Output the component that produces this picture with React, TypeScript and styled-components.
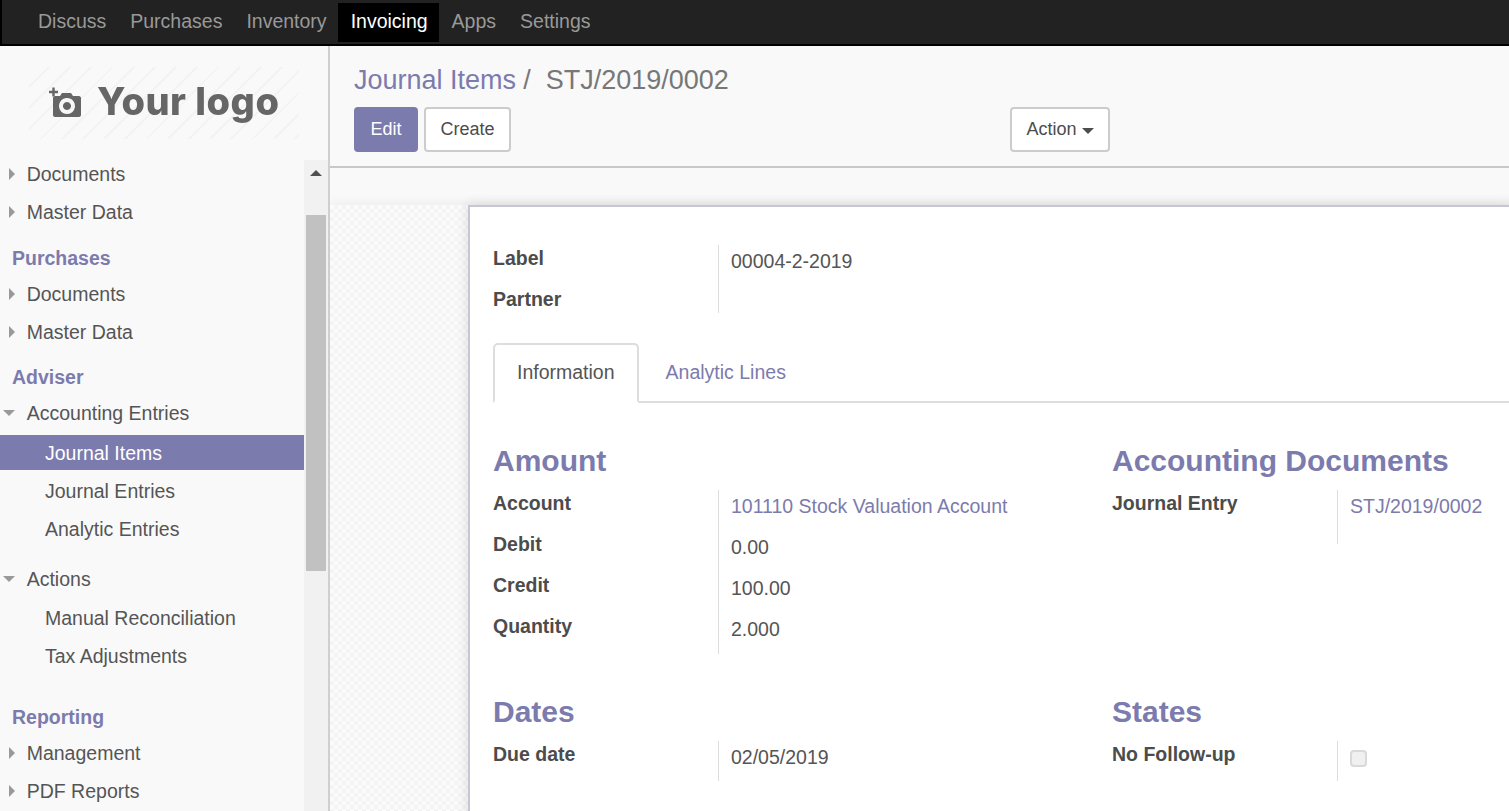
import React from "react";
import styled, { createGlobalStyle } from "styled-components";

const Global = createGlobalStyle`
  html, body { margin: 0; padding: 0; height: 100%; overflow: hidden; }
  body { font-family: "Liberation Sans", Arial, sans-serif; font-size: 19.5px; color: #4c4c4c; background: #f9f9f9; }
  #root { height: 100%; }
  * { box-sizing: border-box; }
`;

const Page = styled.div`
  width: 1509px; height: 811px; display: flex; flex-direction: column; overflow: hidden;
`;

const TopBar = styled.nav`
  height: 46px; flex: none; display: flex; align-items: stretch;
  background: #222; border-bottom: 2px solid #000; border-left: 2px solid #000;
  padding: 3px 0 2px 24px;
`;
const NavItem = styled.a<{ $active?: boolean }>`
  display: flex; align-items: center; padding: 0 12px 2px;
  font-size: 19.5px; color: ${p => (p.$active ? "#fff" : "#999")};
  background: ${p => (p.$active ? "#000" : "transparent")};
  ${p => p.$active && "margin: 0 1px 0 -1px; padding-left: 13px; padding-right: 11px;"}
`;

const Body = styled.div`flex: 1; display: flex; min-height: 0;`;

const Sidebar = styled.aside`
  width: 330px; flex: none; display: flex; flex-direction: column;
  background: #f9f9f9; border-right: 2px solid #cfcfcf;
`;
const LogoBox = styled.div`
  height: 114px; flex: none; padding: 21px 29px 0;
`;
const LogoImage = styled.div`
  width: 270px; height: 72px; display: flex; align-items: center; gap: 15px; padding: 0 0 0 20px;
  background: repeating-linear-gradient(135deg, #f9f9f9 0 13px, #f3f3f3 13px 15px);
`;
const LogoText = styled.span`
  font-family: Inter, "Liberation Sans", sans-serif; font-weight: 800; font-size: 38px; line-height: 1;
  color: #666; position: relative; top: -2px; filter: blur(0.4px); white-space: nowrap; letter-spacing: 0.5px;
`;

const MenuArea = styled.div`flex: 1; display: flex; min-height: 0;`;
const MenuScroll = styled.div`flex: 1; min-width: 0; overflow: hidden;`;
const MenuInner = styled.div`margin-top: -5px;`;
const MenuRow = styled.div<{ $sub?: boolean; $gap?: number; $active?: boolean }>`
  height: ${p => (p.$active ? 35 : 38)}px; display: flex; align-items: center;
  margin-top: ${p => p.$gap ?? 0}px;
  padding-left: ${p => (p.$sub ? 45 : 3)}px;
  padding-top: ${p => (p.$active ? 1 : 0)}px;
  background: ${p => (p.$active ? "#7c7bad" : "transparent")};
  color: ${p => (p.$active ? "#fff" : "#555")};
  white-space: nowrap;
`;
const CaretSlot = styled.span`width: 23.700px; flex: none; display: flex; align-items: center;`;
const CaretRight = styled.i`
  display: block; margin-left: 6px; width: 0; height: 0;
  border-left: 6px solid #999; border-top: 6px solid transparent; border-bottom: 6px solid transparent;
`;
const CaretDown = styled.i`
  display: block; width: 0; height: 0;
  border-top: 6px solid #999; border-left: 6px solid transparent; border-right: 6px solid transparent;
`;
const MenuSection = styled.div<{ $gap: number }>`
  height: 30px; margin-top: ${p => p.$gap}px; padding-left: 12px; display: flex; align-items: center;
  font-weight: 700; color: #7c7bad;
`;

const ScrollTrack = styled.div`
  width: 24px; flex: none; background: #f1f1f1; display: flex; flex-direction: column; padding: 0 2px;
`;
const ScrollArrow = styled.div`
  height: 55px; flex: none; display: flex; justify-content: center; padding-top: 10px;
  &::before { content: ""; width: 0; height: 0; border-bottom: 6px solid #505050; border-left: 6px solid transparent; border-right: 6px solid transparent; }
`;
const ScrollThumb = styled.div`height: 356px; flex: none; background: #c1c1c1;`;

const Main = styled.main`flex: 1; min-width: 0; display: flex; flex-direction: column; overflow: hidden;`;
const ControlPanel = styled.header`
  height: 122px; flex: none; border-bottom: 2px solid #c8c8c8; background: #f9f9f9; padding: 14px 24px 0;
`;
const Breadcrumb = styled.div`font-size: 27px; line-height: 40px; color: #777; white-space: pre; word-spacing: -0.1px;`;
const Crumb = styled.a`color: #7c7bad;`;
const ControlRow = styled.div`display: grid; grid-template-columns: 656px 1fr; margin-top: 7px;`;
const ButtonGroup = styled.div`display: flex; gap: 6px;`;
const Button = styled.button<{ $primary?: boolean }>`
  height: 45px; padding: 0 14.500px; border-radius: 4px; font: 18px "Liberation Sans", Arial, sans-serif;
  border: 2px solid ${p => (p.$primary ? "#7c7bad" : "#ccc")};
  background: ${p => (p.$primary ? "#7c7bad" : "#fff")};
  color: ${p => (p.$primary ? "#fff" : "#4c4c4c")};
  display: flex; align-items: center; gap: 5px;
`;
const ButtonCaret = styled.i`
  display: block; width: 0; height: 0; margin-top: 2px;
  border-top: 6px solid #4c4c4c; border-left: 6px solid transparent; border-right: 6px solid transparent;
`;

const FormView = styled.div`
  flex: 1; min-height: 0; margin-top: 37px; padding-left: 138px;
  background-color: #fbfbfb;
  background-image: conic-gradient(#f4f4f4 25%, transparent 0 50%, #f4f4f4 0 75%, transparent 0);
  background-size: 8px 8px;
  box-shadow: 0 -2px 10px rgba(0, 0, 0, 0.05);
`;
const Sheet = styled.section`
  width: 1300px; min-height: 700px; background: #fff; border: 2px solid #c8c6d4; border-right: 0; border-bottom: 0;
  box-shadow: 0 0 12px rgba(0, 0, 0, 0.12); padding: 38px 0 0 23px;
`;
const FieldTable = styled.div`display: grid; grid-template-columns: 225px 1fr;`;
const FieldLabel = styled.div`font-weight: 700; line-height: 27px; white-space: nowrap;`;
const FieldValue = styled.div<{ $h?: number; $link?: boolean }>`
  height: ${p => p.$h ?? 41}px; border-left: 1px solid #ddd; padding: 3px 0 0 12px; line-height: 27px;
  color: ${p => (p.$link ? "#7c7bad" : "#555")}; white-space: nowrap;
`;
const Tabs = styled.div`
  margin-top: 30px; height: 60px; display: flex; border-bottom: 2px solid #ddd;
`;
const Tab = styled.div<{ $active?: boolean }>`
  height: 60px; padding: 0 ${p => (p.$active ? 22 : 23)}px 1px ${p => (p.$active ? 22 : 27)}px; display: flex; align-items: center;
  border: ${p => (p.$active ? "2px solid #ddd" : "0")}; border-bottom: ${p => (p.$active ? "2px solid #fff" : "0")};
  border-radius: 5px 5px 0 0; background: ${p => (p.$active ? "#fff" : "transparent")};
  color: ${p => (p.$active ? "#555" : "#7c7bad")};
`;
const Groups = styled.div`display: grid; grid-template-columns: 619px 619px;`;
const Group = styled.div``;
const GroupTitle = styled.h2`
  margin: 37px 0 8px; font-size: 30px; line-height: 42px; font-weight: 700; color: #7c7bad; white-space: nowrap;
`;
const Checkbox = styled.span`
  display: block; width: 17px; height: 17px; margin-top: 6px; border: 2px solid #d9d9d9; border-radius: 4px; background: #f0f0f0;
`;

const CameraIcon = () => (
  <svg width="33" height="32" viewBox="0 0 33 32" aria-hidden="true" style={{ filter: "blur(0.4px)" }}>
    <path d="M0 5h9M4.500 .5v9" stroke="#666" strokeWidth="2.400" fill="none" />
    <path fillRule="evenodd" fill="#666" d="M6 9h5l2-3h9l2 3h6c1 0 2 1 2 2v17c0 1-1 2-2 2H6c-1 0-2-1-2-2V11c0-1 1-2 2-2zM18 11a8 8 0 1 0 .01 0zM18 15a4 4 0 1 1-.01 0z" />
  </svg>
);

const Item = ({ open, closed, sub, active, gap, children }: { open?: boolean; closed?: boolean; sub?: boolean; active?: boolean; gap?: number; children: React.ReactNode }) => (
  <MenuRow $sub={sub} $active={active} $gap={gap}>
    {!sub && <CaretSlot>{open ? <CaretDown /> : closed ? <CaretRight /> : null}</CaretSlot>}
    {children}
  </MenuRow>
);

export default function App() {
  return (
    <Page>
      <Global />
      <TopBar>
        <NavItem>Discuss</NavItem>
        <NavItem>Purchases</NavItem>
        <NavItem>Inventory</NavItem>
        <NavItem $active>Invoicing</NavItem>
        <NavItem>Apps</NavItem>
        <NavItem>Settings</NavItem>
      </TopBar>
      <Body>
        <Sidebar>
          <LogoBox>
            <LogoImage>
              <CameraIcon />
              <LogoText>Your logo</LogoText>
            </LogoImage>
          </LogoBox>
          <MenuArea>
            <MenuScroll>
              <MenuInner>
                <Item closed>Documents</Item>
                <Item closed>Master Data</Item>
                <MenuSection $gap={12}>Purchases</MenuSection>
                <Item closed gap={2}>Documents</Item>
                <Item closed>Master Data</Item>
                <MenuSection $gap={11}>Adviser</MenuSection>
                <Item open gap={2}>Accounting Entries</Item>
                <Item sub active gap={3}>Journal Items</Item>
                <Item sub gap={2}>Journal Entries</Item>
                <Item sub>Analytic Entries</Item>
                <Item open gap={12}>Actions</Item>
                <Item sub gap={1}>Manual Reconciliation</Item>
                <Item sub>Tax Adjustments</Item>
                <MenuSection $gap={27}>Reporting</MenuSection>
                <Item closed gap={2}>Management</Item>
                <Item closed>PDF Reports</Item>
              </MenuInner>
            </MenuScroll>
            <ScrollTrack>
              <ScrollArrow />
              <ScrollThumb />
            </ScrollTrack>
          </MenuArea>
        </Sidebar>
        <Main>
          <ControlPanel>
            <Breadcrumb><Crumb>Journal Items</Crumb>{" /  "}STJ/2019/0002</Breadcrumb>
            <ControlRow>
              <ButtonGroup>
                <Button $primary>Edit</Button>
                <Button>Create</Button>
              </ButtonGroup>
              <ButtonGroup>
                <Button>Action<ButtonCaret /></Button>
              </ButtonGroup>
            </ControlRow>
          </ControlPanel>
          <FormView>
            <Sheet>
              <FieldTable>
                <FieldLabel>Label</FieldLabel><FieldValue>00004-2-2019</FieldValue>
                <FieldLabel>Partner</FieldLabel><FieldValue $h={27} />
              </FieldTable>
              <Tabs>
                <Tab $active>Information</Tab>
                <Tab>Analytic Lines</Tab>
              </Tabs>
              <Groups>
                <Group>
                  <GroupTitle>Amount</GroupTitle>
                  <FieldTable>
                    <FieldLabel>Account</FieldLabel><FieldValue $link>101110 Stock Valuation Account</FieldValue>
                    <FieldLabel>Debit</FieldLabel><FieldValue>0.00</FieldValue>
                    <FieldLabel>Credit</FieldLabel><FieldValue>100.00</FieldValue>
                    <FieldLabel>Quantity</FieldLabel><FieldValue>2.000</FieldValue>
                  </FieldTable>
                </Group>
                <Group>
                  <GroupTitle>Accounting Documents</GroupTitle>
                  <FieldTable>
                    <FieldLabel>Journal Entry</FieldLabel><FieldValue $link $h={54}>STJ/2019/0002</FieldValue>
                  </FieldTable>
                </Group>
                <Group>
                  <GroupTitle>Dates</GroupTitle>
                  <FieldTable>
                    <FieldLabel>Due date</FieldLabel><FieldValue $h={40}>02/05/2019</FieldValue>
                  </FieldTable>
                </Group>
                <Group>
                  <GroupTitle>States</GroupTitle>
                  <FieldTable>
                    <FieldLabel>No Follow-up</FieldLabel><FieldValue $h={40}><Checkbox /></FieldValue>
                  </FieldTable>
                </Group>
              </Groups>
            </Sheet>
          </FormView>
        </Main>
      </Body>
    </Page>
  );
}
